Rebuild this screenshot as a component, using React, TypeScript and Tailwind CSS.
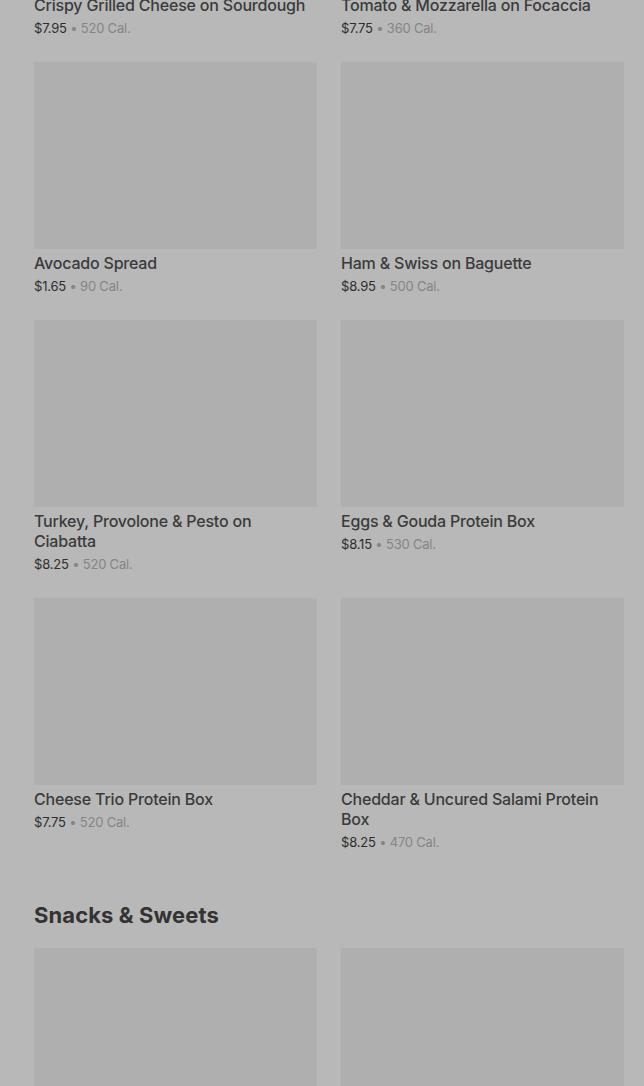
import React from "react";

type Item = { name: string; price: string; cal: string };

const sandwiches: Item[] = [
  { name: "Crispy Grilled Cheese on Sourdough", price: "$7.95", cal: "520 Cal." },
  { name: "Tomato & Mozzarella on Focaccia", price: "$7.75", cal: "360 Cal." },
  { name: "Avocado Spread", price: "$1.65", cal: "90 Cal." },
  { name: "Ham & Swiss on Baguette", price: "$8.95", cal: "500 Cal." },
  { name: "Turkey, Provolone & Pesto on Ciabatta", price: "$8.25", cal: "520 Cal." },
  { name: "Eggs & Gouda Protein Box", price: "$8.15", cal: "530 Cal." },
  { name: "Cheese Trio Protein Box", price: "$7.75", cal: "520 Cal." },
  { name: "Cheddar & Uncured Salami Protein Box", price: "$8.25", cal: "470 Cal." },
];

function MenuCard({ item }: { item: Item }) {
  return (
    <div className="flex flex-col">
      <div className="h-[187px] w-full bg-[#afafaf]" />
      <h3 className="mt-1 text-[16px] leading-[20px] font-medium tracking-[-0.2px] text-[#3b3b3b]">{item.name}</h3>
      <p className="mt-[3px] text-[13px] leading-[20px] tracking-[-0.2px]">
        <span className="text-[#2e2e2e]">{item.price}</span>
        <span className="text-[#858585]"> • {item.cal}</span>
      </p>
    </div>
  );
}

export default function App() {
  return (
    <div
      className="min-h-[1086px] w-full overflow-hidden bg-[#b8b8b8] pl-[34px] pr-[20px]"
      style={{ fontFamily: "Inter, 'Liberation Sans', sans-serif" }}
    >
      <div className="-mt-[196px] grid grid-cols-2 gap-x-6 gap-y-6">
        {sandwiches.map((it) => (
          <MenuCard key={it.name} item={it} />
        ))}
      </div>

      <h2 className="mt-[49px] text-[22px] leading-[28px] font-bold tracking-[0.1px] text-[#333333]">
        Snacks &amp; Sweets
      </h2>
      <div className="mt-[19px] grid grid-cols-2 gap-x-6">
        <div className="h-[187px] bg-[#afafaf]" />
        <div className="h-[187px] bg-[#afafaf]" />
      </div>
    </div>
  );
}
